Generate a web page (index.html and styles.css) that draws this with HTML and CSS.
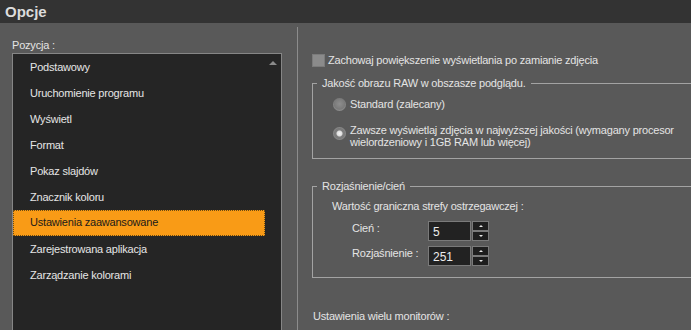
FILE: index.html
```html
<!DOCTYPE html>
<html lang="pl">
<head>
<meta charset="utf-8">
<title>Opcje</title>
<link rel="stylesheet" href="styles.css">
</head>
<body>
<div class="window">
  <div class="titlebar">Opcje</div>
  <div class="content">
    <div class="left">
      <div class="label">Pozycja :</div>
      <div class="listbox">
        <ul class="items">
          <li>Podstawowy</li>
          <li>Uruchomienie programu</li>
          <li>Wyświetl</li>
          <li>Format</li>
          <li>Pokaz slajdów</li>
          <li>Znacznik koloru</li>
          <li class="selected">Ustawienia zaawansowane</li>
          <li>Zarejestrowana aplikacja</li>
          <li>Zarządzanie kolorami</li>
        </ul>
        <div class="scrollbar"><span class="arrow-up"></span></div>
      </div>
    </div>
    <div class="right">
      <div class="check-row">
        <span class="checkbox"></span>
        <span>Zachowaj powiększenie wyświetlania po zamianie zdjęcia</span>
      </div>
      <fieldset class="group group-raw">
        <legend>Jakość obrazu RAW w obszasze podglądu.</legend>
        <div class="group-body raw-body">
          <div class="radio-row">
            <span class="radio"></span>
            <span>Standard (zalecany)</span>
          </div>
          <div class="radio-row multi">
            <span class="radio checked"></span>
            <span class="radio-text">Zawsze wyświetlaj zdjęcia w najwyższej jakości (wymagany procesor<br>wielordzeniowy i 1GB RAM lub więcej)</span>
          </div>
        </div>
      </fieldset>
      <fieldset class="group group-shadow">
        <legend>Rozjaśnienie/cień</legend>
        <div class="group-body shadow-body">
          <div class="threshold">Wartość graniczna strefy ostrzegawczej :</div>
          <div class="spin-row">
            <span class="spin-label">Cień :</span>
            <div class="spin">
              <span class="spin-value">5</span>
              <div class="spin-buttons">
                <span class="spin-btn"><span class="tri up"></span></span>
                <span class="spin-btn"><span class="tri down"></span></span>
              </div>
            </div>
          </div>
          <div class="spin-row second">
            <span class="spin-label">Rozjaśnienie :</span>
            <div class="spin">
              <span class="spin-value">251</span>
              <div class="spin-buttons">
                <span class="spin-btn"><span class="tri up"></span></span>
                <span class="spin-btn"><span class="tri down"></span></span>
              </div>
            </div>
          </div>
        </div>
      </fieldset>
      <div class="monitors">Ustawienia wielu monitorów :</div>
    </div>
  </div>
</div>
</body>
</html>
```
FILE: styles.css
```css
html, body {
  margin: 0;
  padding: 0;
  background: #595959;
}
body {
  font-family: "Liberation Sans", Arial, sans-serif;
  font-size: 11px;
  letter-spacing: -0.2px;
  color: #e4e4e4;
  width: 691px;
  height: 330px;
  overflow: hidden;
}
.window {
  display: flex;
  flex-direction: column;
  height: 330px;
}
.titlebar {
  height: 23px;
  line-height: 23px;
  background: #333333;
  color: #dcdcdc;
  font-weight: bold;
  font-size: 15px;
  letter-spacing: 0;
  padding-left: 5px;
  flex: none;
}
.content {
  display: flex;
  flex: 1;
  min-height: 0;
}
.left {
  width: 285px;
  padding: 15px 0 0 12px;
  flex: none;
  display: flex;
  flex-direction: column;
}
.label {
  height: 14px;
  line-height: 14px;
  margin-bottom: 1px;
}
.listbox {
  width: 268px;
  flex: 1;
  background: #252525;
  border: 1px solid #868686;
  border-bottom: none;
  display: flex;
}
.items {
  list-style: none;
  margin: 0;
  padding: 0;
  width: 252px;
}
.items li {
  height: 26px;
  line-height: 26px;
  padding-left: 17px;
  color: #e6e6e6;
  box-sizing: border-box;
}
.items li.selected {
  background: #f99b16;
  color: #1a1a1a;
  border: 1px dotted #6b4a12;
  line-height: 23px;
  padding-left: 16px;
}
.scrollbar {
  flex: 1;
  display: flex;
  justify-content: center;
  padding-top: 7px;
}
.arrow-up {
  width: 0;
  height: 0;
  border-left: 4px solid transparent;
  border-right: 4px solid transparent;
  border-bottom: 4px solid #8a8a8a;
  margin-right: 1px;
}
.right {
  flex: 1;
  margin-top: 4px;
  border-left: 1px solid #8c8c8c;
  padding: 27px 0 0 14px;
  overflow: hidden;
}
.check-row {
  display: flex;
  align-items: center;
  gap: 3px;
  height: 13px;
  line-height: 13px;
}
.checkbox {
  width: 11px;
  height: 11px;
  background: #8b8b8b;
  border: 1px solid #7b7b7b;
  flex: none;
}
.group {
  margin: 9px -30px 0 0;
  padding: 0;
  border: 1px solid #a3a3a3;
  min-width: 0;
}
.group legend {
  margin-left: 4px;
  padding: 0 5px;
  line-height: 14px;
  height: 14px;
}
.raw-body {
  padding: 7px 0 10px 20px;
}
.radio-row {
  display: flex;
  align-items: center;
  gap: 4px;
  height: 14px;
  line-height: 14px;
}
.radio-row.multi {
  align-items: flex-start;
  height: auto;
  margin-top: 13px;
  line-height: 12px;
}
.radio-row.multi .radio {
  margin-top: 3px;
}
.radio {
  width: 13px;
  height: 13px;
  border-radius: 50%;
  flex: none;
  box-sizing: border-box;
  background: radial-gradient(circle at 50% 45%, #8e8e8e 0, #7a7a7a 55%, #9a9a9a 80%, #6c6c6c 100%);
}
.radio.checked {
  background: radial-gradient(circle at 50% 50%, #f4f4f4 0, #dedede 2.5px, #7d7d7d 3.5px, #7a7a7a 55%, #9a9a9a 80%, #6c6c6c 100%);
}
.group-shadow {
  margin-top: 20px;
}
.shadow-body {
  padding: 6px 0 11px 19px;
}
.threshold {
  height: 14px;
  line-height: 14px;
}
.spin-row {
  display: flex;
  align-items: flex-start;
  margin-top: 8px;
  padding-left: 20px;
}
.spin-row.second {
  margin-top: 5px;
}
.spin-label {
  width: 76px;
  line-height: 14px;
}
.spin {
  display: flex;
  gap: 1px;
  height: 20px;
}
.spin-value {
  width: 37px;
  height: 18px;
  background: #222222;
  border: 1px solid #7a7a7a;
  padding-left: 4px;
  line-height: 20px;
  font-size: 12px;
  letter-spacing: 0;
  color: #ececec;
}
.spin-buttons {
  display: flex;
  flex-direction: column;
}
.spin-btn {
  width: 15px;
  height: 8px;
  background: #1e1e1e;
  border: 1px solid #7a7a7a;
  display: flex;
  justify-content: center;
  align-items: center;
}
.tri {
  width: 0;
  height: 0;
  border-left: 2px solid transparent;
  border-right: 2px solid transparent;
}
.tri.up {
  border-bottom: 2px solid #e8e8e8;
}
.tri.down {
  border-top: 2px solid #e8e8e8;
}
.monitors {
  margin-top: 31px;
  margin-left: 1px;
  line-height: 14px;
}
```
